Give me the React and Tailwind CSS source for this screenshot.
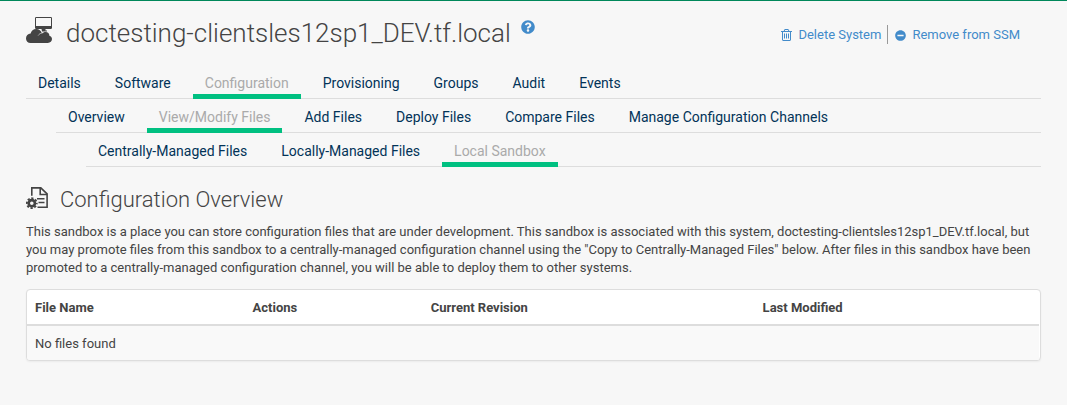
import { FaMinusCircle, FaQuestionCircle } from 'react-icons/fa';

const tabRows = [
  {
    label: 'System',
    indent: '',
    active: 'Configuration',
    tabs: ['Details', 'Software', 'Configuration', 'Provisioning', 'Groups', 'Audit', 'Events'],
  },
  {
    label: 'Configuration',
    indent: 'ml-[30px]',
    active: 'View/Modify Files',
    tabs: ['Overview', 'View/Modify Files', 'Add Files', 'Deploy Files', 'Compare Files', 'Manage Configuration Channels'],
  },
  {
    label: 'Files',
    indent: 'ml-[60px]',
    active: 'Local Sandbox',
    tabs: ['Centrally-Managed Files', 'Locally-Managed Files', 'Local Sandbox'],
  },
];

const columns = [
  { name: 'File Name', width: 'w-[21.5%]' },
  { name: 'Actions', width: 'w-[17.6%]' },
  { name: 'Current Revision', width: 'w-[32.8%]' },
  { name: 'Last Modified', width: '' },
];

function SystemIcon() {
  return (
    <svg viewBox="0 0 26 26" className="size-[26px] shrink-0" fill="currentColor" aria-hidden="true">
      <path fillRule="evenodd" d="M10.200 0h14.600a1.200 1.200 0 0 1 1.200 1.200v9.600a1.200 1.200 0 0 1-1.200 1.200H10.200A1.200 1.200 0 0 1 9 10.800V1.200A1.200 1.200 0 0 1 10.200 0zM10 1v8h15V1z" />
      <path d="M15.500 12h4v1.500h1.500v1h-5z" />
      <path d="M4.600 26C1.800 26 0 24 0 21.400c0-2.600 1.900-4.600 4.600-4.800C5.200 13.800 7.400 12 10.200 12c2.900 0 5 1.700 5.600 4.300l.4.300c.8-1 1.900-1.500 3.300-1.500 2.400 0 4 1.500 3.900 3.600 1.600.4 2.600 1.700 2.600 3.400 0 2.300-1.700 3.900-4.200 3.900z" />
      <path d="M12.200 18.500c.8-1.300 1.900-2.100 3.500-2.200" fill="none" stroke="#f7f7f7" strokeWidth=".6" />
    </svg>
  );
}

function FileConfigIcon() {
  return (
    <svg viewBox="0 0 22 22" className="size-[22px] shrink-0" aria-hidden="true">
      <g fill="none" stroke="currentColor" strokeWidth="1.600">
        <path d="M5.800 8.800V.9h9l6.300 6v13.300H11.500" />
        <path d="M14.200 1v6.500h7" />
        <path d="M11 11.700h7.500M12.500 15.500h6" />
      </g>
      <circle cx="5.800" cy="16.200" r="3.100" fill="none" stroke="currentColor" strokeWidth="2.600" />
      <circle cx="5.800" cy="16.200" r="4.900" fill="none" stroke="currentColor" strokeWidth="1.900" strokeDasharray="2.200 1.648" strokeDashoffset="1.100" />
    </svg>
  );
}

function TrashIcon() {
  return (
    <svg viewBox="192 128 1408 1536" className="h-[12px] w-[11px]" fill="currentColor" aria-hidden="true">
      <path d="M704 736v576q0 14-9 23t-23 9h-64q-14 0-23-9t-9-23v-576q0-14 9-23t23-9h64q14 0 23 9t9 23zm256 0v576q0 14-9 23t-23 9h-64q-14 0-23-9t-9-23v-576q0-14 9-23t23-9h64q14 0 23 9t9 23zm256 0v576q0 14-9 23t-23 9h-64q-14 0-23-9t-9-23v-576q0-14 9-23t23-9h64q14 0 23 9t9 23zm128 724v-948h-896v948q0 22 7 40.500t14.500 27 10.500 8.500h832q3 0 10.500-8.500t14.500-27 7-40.500zm-672-1076h448l-48-117q-7-9-17-11h-317q-10 2-17 11zm928 32v64q0 14-9 23t-23 9h-96v948q0 83-47 143.500t-113 60.500h-832q-66 0-113-58.500t-47-141.500v-952h-96q-14 0-23-9t-9-23v-64q0-14 9-23t23-9h309l70-167q15-37 54-63t79-26h320q40 0 79 26t54 63l70 167h309q14 0 23 9t9 23z" />
    </svg>
  );
}

function TabRow({ label, indent, active, tabs }) {
  return (
    <nav aria-label={label} className={indent}>
      <ul className="flex gap-[10px] border-b border-[#dddddd]">
        {tabs.map((tab) => (
          <li key={tab} className="-mb-px">
            <a
              href="#"
              aria-current={tab === active ? 'page' : undefined}
              className={
                tab === active
                  ? 'block border-b-[5px] border-[#00c081] px-3 pt-[7px] text-sm leading-[22px] text-[#aaaaaa]'
                  : 'block border-b-[5px] border-transparent px-3 pt-[7px] text-sm leading-[22px] text-[#023358]'
              }
            >
              {tab}
            </a>
          </li>
        ))}
      </ul>
    </nav>
  );
}

export default function App() {
  return (
    <main className="min-h-screen border-t border-[#00885b] bg-[#f7f7f7] px-[26px] font-['Roboto','Liberation_Sans',sans-serif] text-[13px] leading-[18px] text-[#444444]">
      <header className="flex items-start justify-between pt-4">
        <div className="flex items-start">
          <SystemIcon />
          <h1 className="ml-[14px] text-[26px] leading-8 font-light">doctesting-clientsles12sp1_DEV.tf.local</h1>
          <a href="#" aria-label="Help" className="mt-[3px] ml-[10px] text-[#428bca]">
            <FaQuestionCircle className="size-[14px]" />
          </a>
        </div>
        <div className="mt-2 mr-[21px] flex items-center text-[#428bca]">
          <a href="#" className="flex items-center gap-[6px] border-r border-[#999999] pt-px pr-[6px]">
            <TrashIcon />
            Delete System
          </a>
          <a href="#" className="flex items-center gap-[6px] pt-px pl-[7px]">
            <FaMinusCircle className="size-[11px]" />
            Remove from SSM
          </a>
        </div>
      </header>

      <div className="mt-4">
        {tabRows.map((row) => (
          <TabRow key={row.label} {...row} />
        ))}
      </div>

      <section>
        <h2 className="mt-5 flex items-start gap-3 text-[22px] leading-[26px] font-light">
          <FileConfigIcon />
          Configuration Overview
        </h2>
        <p className="mt-[10px]">
          This sandbox is a place you can store configuration files that are under development. This sandbox is
          associated with this system, doctesting-clientsles12sp1_DEV.tf.local, but you may promote files from this
          sandbox to a centrally-managed configuration channel using the "Copy to Centrally-Managed Files" below. After
          files in this sandbox have been promoted to a centrally-managed configuration channel, you will be able to
          deploy them to other systems.
        </p>
        <div className="mt-3 overflow-hidden rounded border border-[#dddddd] bg-white pr-px shadow-xs">
          <table className="w-full table-fixed border-collapse text-left">
            <thead>
              <tr className="border-b-2 border-[#dddddd]">
                {columns.map((column) => (
                  <th key={column.name} scope="col" className={`${column.width} px-2 pt-[9px] pb-[7px] font-bold`}>
                    {column.name}
                  </th>
                ))}
              </tr>
            </thead>
            <tbody>
              <tr className="bg-[#f9f9f9]">
                <td colSpan={4} className="px-2 pt-[9px] pb-[7px]">
                  No files found
                </td>
              </tr>
            </tbody>
          </table>
        </div>
      </section>
    </main>
  );
}
